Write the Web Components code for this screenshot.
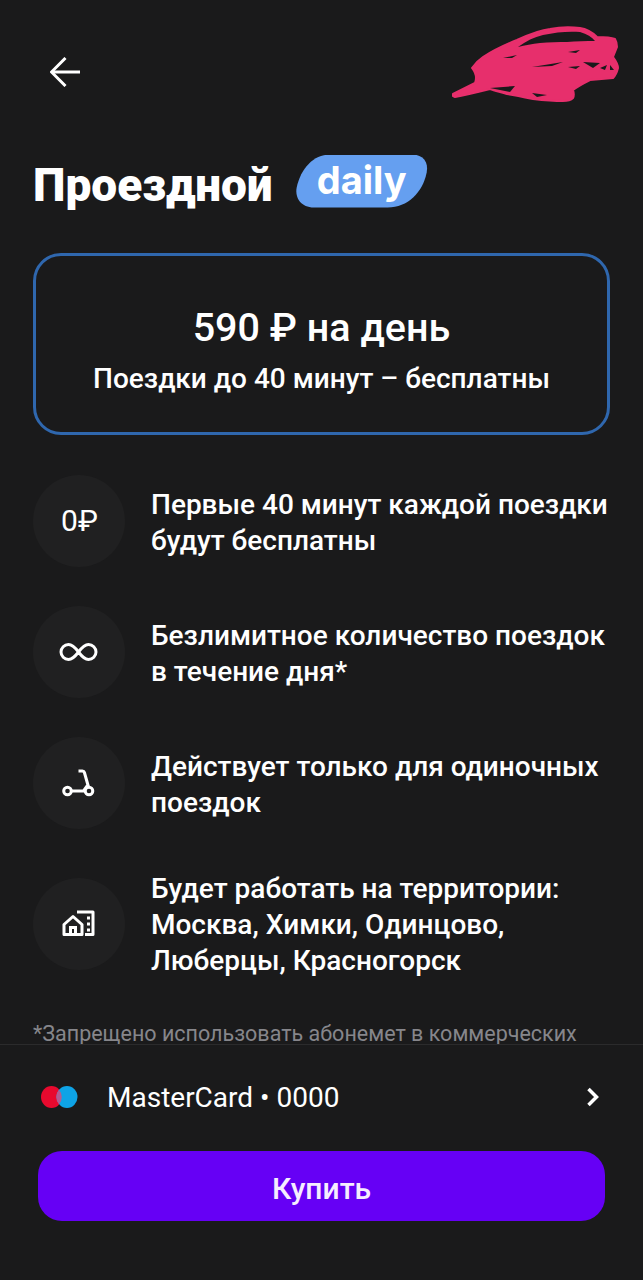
<!DOCTYPE html>
<html lang="ru">
<head>
<meta charset="utf-8">
<title>Проездной</title>
<style>
    html, body { margin: 0; height: 100%; background: #1a1a1b; }
    body { font-family: Roboto, "Liberation Sans", sans-serif; color: #fff; overflow: hidden; }
</style>
</head>
<body>
<pass-screen>
    <top-bar></top-bar>
    <pass-title>Проездной<pass-badge slot="badge">daily</pass-badge></pass-title>
    <price-card>
        <span slot="price">590 ₽ на день</span>
        <span slot="note">Поездки до 40 минут – бесплатны</span>
    </price-card>
    <feature-list>
        <feature-row>
            <span slot="icon" class="zero">0₽</span>
            Первые 40 минут каждой поездки<br>будут бесплатны
        </feature-row>
        <feature-row>
            <svg slot="icon" width="92" height="92" viewBox="0 0 92 92" fill="none" stroke="#fff" stroke-width="3">
                <path d="M45.500 46C41 40 38.500 38.500 35.500 38.500a7.500 7.500 0 0 0 0 15c3 0 5.500-1.500 10-7.500s7-7.500 10-7.500a7.500 7.500 0 0 1 0 15c-3 0-5.500-1.500-10-7.500z"/>
            </svg>
            Безлимитное количество поездок<br>в течение дня*
        </feature-row>
        <feature-row>
            <svg slot="icon" width="92" height="92" viewBox="0 0 92 92" fill="none" stroke="#fff" stroke-width="3">
                <circle cx="34.500" cy="54" r="3.800"/>
                <circle cx="56" cy="54" r="3.800"/>
                <path d="M38.500 54H50.500L54.500 48.500"/>
                <path d="M45.500 34H49.500Q51 34 51.400 35.500L55.500 50"/>
            </svg>
            Действует только для одиночных<br>поездок
        </feature-row>
        <feature-row>
            <svg slot="icon" width="92" height="92" viewBox="0 0 92 92" fill="none">
                <path d="M31 46.500L40 38.500L49 46.500V56.500H31Z" stroke="#fff" stroke-width="3" stroke-linejoin="round"/>
                <path d="M37.500 56V49.500H42.500V56" stroke="#fff" stroke-width="3"/>
                <path d="M44 34H60V56.500H52" stroke="#fff" stroke-width="3" stroke-linejoin="round"/>
                <path d="M54 38.500h3v3h-3zM54 44.500h3v3h-3zM54 50.500h3v3h-3z" fill="#fff"/>
            </svg>
            Будет работать на территории:<br>Москва, Химки, Одинцово,<br>Люберцы, Красногорск
        </feature-row>
    </feature-list>
    <fine-print>*Запрещено использовать абонемет в коммерческих</fine-print>
    <pay-footer slot="footer">
        <span slot="card">MasterCard • 0000</span>
        <span slot="action">Купить</span>
    </pay-footer>
</pass-screen>

<script>
// простая обёртка: создаёт shadow root и кладёт туда разметку
class ShadowEl extends HTMLElement {
    constructor() {
        super();
        this.attachShadow({ mode: 'open' });
    }

    connectedCallback() {
        this.shadowRoot.innerHTML = this.markup();
    }
}

class PassScreen extends ShadowEl {
    markup() {
        return `
            <style>
                :host {
                    display: flex;
                    flex-direction: column;
                    height: 1280px;
                    background: #1a1a1b;
                }
                .scroll {
                    flex: 1;
                    min-height: 0;
                    overflow: hidden;
                    padding: 0 33px;
                }
            </style>
            <div class="scroll"><slot></slot></div>
            <slot name="footer"></slot>
        `;
    }
}

class TopBar extends ShadowEl {
    markup() {
        return `
            <style>
                :host {
                    display: flex;
                    justify-content: space-between;
                    align-items: flex-start;
                    height: 150px;
                    margin: 0 -33px;
                    padding: 0 21px 0 50px;
                }
                .back { display: block; margin-top: 57px; }
                .scribble { display: block; margin-top: 26px; }
            </style>
            <svg class="back" width="30" height="30" viewBox="0 0 30 30" fill="none" stroke="#fff" stroke-width="3">
                <path d="M30 15H2"/>
                <path d="M15.500 1L1.500 15L15.500 29"/>
            </svg>
            <svg class="scribble" width="170" height="78" viewBox="0 0 170 78" fill="#e72f6c" stroke="#e72f6c">
                <path d="M20 42C24 36 28 33 31 31C45 22 55 18 65 14C78 8 88 4 98 3C108 1 120 1 128 2C136 3 141 7 145 11C152 11 158 11 163 13C165 16 165 19 165 21L161 31C164 35 166 38 166 42C165 46 164 49 161 52L138 54C132 57 126 60 121 64C122 67 122 70 121 72C118 75 115 75 111 75C100 75 90 74 81 73C72 71 63 69 55 68C49 66 43 65 38 63C26 66 14 69 3 71C0 70 0 69 1 68L23 57C25 52 24 47 20 42Z" stroke-width="2" stroke-linejoin="round"/>
                <g fill="#1a1a1b" stroke="none">
                    <path d="M66 21C74 15 82 11 91 9C104 6 118 5 128 6C135 8 140 11 143 15C134 15 124 15 115 16C106 16 97 16 88 17C80 18 73 19 66 21Z"/>
                    <path d="M51 32L65 29L60 32Z"/>
                    <path d="M80 41L111 36L100 40Z"/>
                    <path d="M116 26L128 24L124 27Z"/>
                    <path d="M116 41L128 40L124 43Z"/>
                    <path d="M131 36L148 37L141 42Z"/>
                    <path d="M148 42L155 39L153 44Z"/>
                    <path d="M158 39L162 44L158 44Z"/>
                    <path d="M38 62L63 60L58 66Z"/>
                    <path d="M80 67L95 69L85 71Z"/>
                </g>
            </svg>
        `;
    }
}

class PassTitle extends ShadowEl {
    markup() {
        return `
            <style>
                :host {
                    display: flex;
                    align-items: center;
                    gap: 23px;
                    height: 70px;
                    margin-bottom: 33px;
                    font-size: 46px;
                    font-weight: 900;
                    color: #fff;
                }
                slot[name="badge"] { display: block; }
            </style>
            <slot></slot><slot name="badge"></slot>
        `;
    }
}

class PassBadge extends ShadowEl {
    markup() {
        return `
            <style>
                :host {
                    display: flex;
                    align-items: center;
                    justify-content: center;
                    box-sizing: border-box;
                    width: 132px;
                    height: 53px;
                    margin-top: -8px;
                    padding-bottom: 2px;
                    background: #659ff0;
                    clip-path: path("M34 0H116C128 0 133 8 131 18C127 38 112 53 92 53H18C6 53 -1 44 1 33C5 14 18 0 34 0Z");
                    font-family: Inter, Roboto, sans-serif;
                    font-size: 38px;
                    font-weight: 700;
                    color: #fff;
                }
            </style>
            <slot></slot>
        `;
    }
}

class PriceCard extends ShadowEl {
    markup() {
        return `
            <style>
                :host {
                    display: flex;
                    flex-direction: column;
                    align-items: center;
                    box-sizing: border-box;
                    height: 182px;
                    padding-top: 47px;
                    margin-bottom: 40px;
                    border: 3px solid #2f67ae;
                    border-radius: 28px;
                    color: #fff;
                }
                .price { font-size: 39.500px; font-weight: 500; line-height: 50px; }
                .note { font-size: 28px; font-weight: 500; line-height: 36px; margin-top: 8px; }
            </style>
            <div class="price"><slot name="price"></slot></div>
            <div class="note"><slot name="note"></slot></div>
        `;
    }
}

class FeatureList extends ShadowEl {
    markup() {
        return `
            <style>
                :host {
                    display: flex;
                    flex-direction: column;
                    gap: 39px;
                    margin-bottom: 40px;
                }
            </style>
            <slot></slot>
        `;
    }
}

class FeatureRow extends ShadowEl {
    markup() {
        return `
            <style>
                :host {
                    display: flex;
                    align-items: center;
                    gap: 26px;
                    font-size: 28px;
                    font-weight: 500;
                    line-height: 36px;
                    color: #fff;
                    white-space: nowrap;
                }
                .circle {
                    display: flex;
                    align-items: center;
                    justify-content: center;
                    flex: none;
                    width: 92px;
                    height: 92px;
                    border-radius: 50%;
                    background: #202021;
                }
                .text { padding-top: 3px; }
                ::slotted(.zero) { font-size: 30px; font-weight: 400; padding-left: 1px; }
            </style>
            <div class="circle"><slot name="icon"></slot></div>
            <div class="text"><slot></slot></div>
        `;
    }
}

class FinePrint extends ShadowEl {
    markup() {
        return `
            <style>
                :host {
                    display: block;
                    font-size: 21.500px;
                    line-height: 30px;
                    color: #86868b;
                    white-space: nowrap;
                }
            </style>
            <slot></slot>
        `;
    }
}

class PayFooter extends ShadowEl {
    markup() {
        return `
            <style>
                :host {
                    display: block;
                    flex: none;
                    box-sizing: border-box;
                    height: 236px;
                    padding: 0 38px;
                    border-top: 1px solid #2b2b2c;
                }
                .card {
                    display: flex;
                    align-items: center;
                    height: 106px;
                    padding-bottom: 2px;
                    box-sizing: border-box;
                    font-size: 28px;
                    color: #fff;
                }
                .card svg { display: block; flex: none; }
                .card .mc { margin-right: 29px; }
                .card span { flex: 1; }
                .buy {
                    display: flex;
                    align-items: center;
                    justify-content: center;
                    box-sizing: border-box;
                    height: 70px;
                    padding-top: 4px;
                    border-radius: 24px;
                    background: #6600f5;
                    font-size: 30px;
                    font-weight: 500;
                    color: #f6eeff;
                }
            </style>
            <div class="card">
                <svg class="mc" width="40" height="24" viewBox="0 0 40 24">
                    <ellipse cx="13.500" cy="12" rx="10.500" ry="11" fill="#e8092e"/>
                    <ellipse cx="29" cy="12" rx="10.500" ry="11" fill="#0ea3e6"/>
                    <path d="M21 4.700a11 11 0 0 1 0 14.600a11 11 0 0 1 0-14.600z" fill="#b25c92"/>
                </svg>
                <span><slot name="card"></slot></span>
                <svg width="14" height="20" viewBox="0 0 14 20" fill="none" stroke="#fff" stroke-width="3.500" style="margin-right:5px">
                    <path d="M2.500 2L10.500 10L2.500 18"/>
                </svg>
            </div>
            <div class="buy"><slot name="action"></slot></div>
        `;
    }
}

customElements.define('pass-screen', PassScreen);
customElements.define('top-bar', TopBar);
customElements.define('pass-title', PassTitle);
customElements.define('pass-badge', PassBadge);
customElements.define('price-card', PriceCard);
customElements.define('feature-list', FeatureList);
customElements.define('feature-row', FeatureRow);
customElements.define('fine-print', FinePrint);
customElements.define('pay-footer', PayFooter);
</script>
</body>
</html>
